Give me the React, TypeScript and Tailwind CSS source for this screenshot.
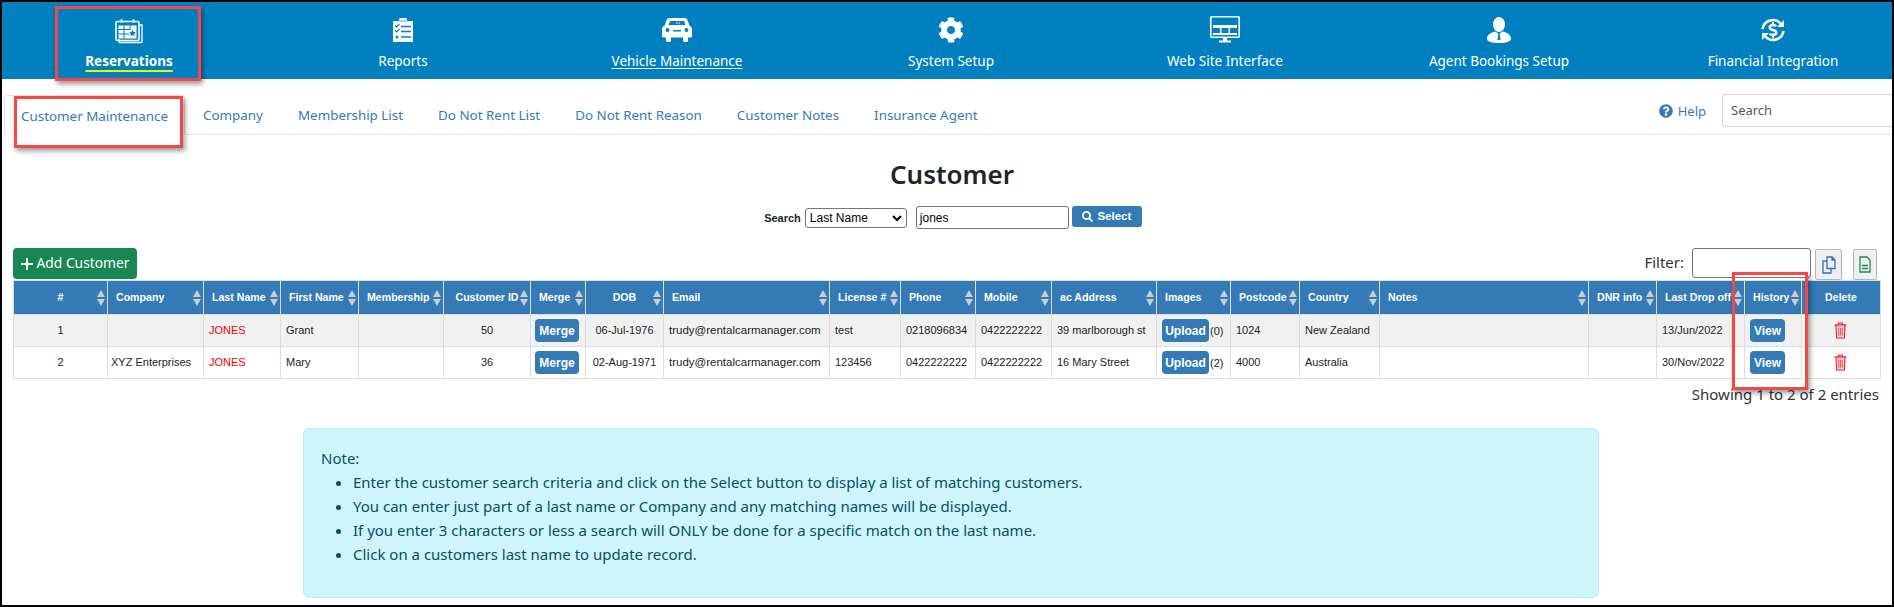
import { FaCog, FaDollarSign, FaQuestionCircle, FaSearch } from "react-icons/fa";

const CalendarIcon = () => (
  <svg width="28" height="26" viewBox="0 0 28 26" fill="none" stroke="white" className="mt-[2px]">
    <path d="M4 21v2.500a1 1 0 0 0 1 1h21a1 1 0 0 0 1-1V7h-2.500" strokeWidth="1.300" />
    <rect x="1" y="3.500" width="23" height="19" rx="1.500" strokeWidth="1.600" />
    <rect x="5.500" y="1" width="2" height="4" rx="1" fill="#cfe6f3" stroke="none" />
    <rect x="17.500" y="1" width="2" height="4" rx="1" fill="#cfe6f3" stroke="none" />
    <rect x="3.500" y="7.500" width="18" height="13" fill="white" stroke="none" />
    <path d="M3.500 6.500h18" stroke="#0180c0" strokeWidth="1" />
    <path d="M9 7.500v13M15 7.500v4M3.500 11.500h12M3.500 16h11" stroke="#0180c0" strokeWidth="1.100" />
    <path d="M17.500 11.700l1.100 2.200 2.300.3-1.700 1.600.4 2.400-2.100-1.200-2.100 1.200.4-2.400-1.700-1.600 2.300-.3z" fill="#0180c0" stroke="none" />
  </svg>
);

const ReportsIcon = () => (
  <svg width="20" height="24" viewBox="0 0 20 24">
    <path d="M0 3h6V1.500A1.500 1.500 0 0 1 7.500 0h5A1.500 1.500 0 0 1 14 1.500V3h6v21H0z" fill="white" />
    <path d="M6 3h8" stroke="#0180c0" strokeWidth="0.700" />
    <path d="M2 7.500l1.500 1.500 3-3M2 12.500l1.500 1.500 3-3" stroke="#0180c0" strokeWidth="1.100" fill="none" />
    <path d="M8 8.500h10M8 13.500h10M8 19h10" stroke="#0180c0" strokeWidth="1.300" />
    <circle cx="4" cy="19" r="1.500" fill="#0180c0" />
  </svg>
);

const CarIcon = () => (
  <svg width="30" height="24" viewBox="0 0 30 24">
    <path
      fillRule="evenodd"
      fill="white"
      d="M7.500 0h15c1.400 0 2.400.8 2.900 2l2 5.500c1.500.8 2.600 2.200 2.600 4v6.500c0 .8-.6 1.500-1.400 1.500H26v3c0 .8-.6 1.500-1.400 1.500h-2.200c-.8 0-1.400-.7-1.400-1.500v-3H9v3c0 .8-.6 1.500-1.400 1.500H5.400C4.600 24 4 23.300 4 22.500v-3H1.400C.6 19.500 0 18.800 0 18v-6.500c0-1.800 1.100-3.200 2.600-4l2-5.500C5.100.8 6.100 0 7.500 0zM8 3L6.500 7h17L22 3zM5.500 10a2 2 0 1 0 0 4 2 2 0 0 0 0-4zm19 0a2 2 0 1 0 0 4 2 2 0 0 0 0-4zM11 12v1.500h8V12z"
    />
    <path d="M14 6l1.500-2M16.500 6L18 4" stroke="white" strokeWidth="0.800" />
  </svg>
);

const MonitorIcon = () => (
  <svg width="30" height="27" viewBox="0 0 30 27" fill="none">
    <rect x="0.800" y="0.800" width="28.400" height="20.400" rx="1" stroke="white" strokeWidth="1.600" />
    <rect x="3" y="3" width="24" height="6" fill="#0180c0" />
    <rect x="3" y="9" width="24" height="10" fill="white" />
    <rect x="3" y="12" width="7" height="5" fill="#0180c0" />
    <rect x="11.500" y="12" width="7" height="5" fill="#0180c0" />
    <rect x="20" y="12" width="7" height="5" fill="#0180c0" />
    <path d="M13 22h4v2.500h-4zM9 24.500h12V26.500H9z" fill="white" />
  </svg>
);

const AgentIcon = () => (
  <svg width="24" height="26" viewBox="0 0 24 26">
    <ellipse cx="12" cy="7.500" rx="6" ry="7.500" fill="white" />
    <path d="M0 22c0-4 3-6 8-7.500l4 2 4-2c5 1.500 8 3.500 8 7.500 0 2.500-5 4-12 4S0 24.500 0 22z" fill="white" />
    <path d="M10.500 15.500l1.500 1 1.500-1-.8 2 .8 5.500h-3l.8-5.500z" fill="#0180c0" />
  </svg>
);

const FinanceIcon = () => (
  <span className="relative flex h-[24px] w-[26px] items-center justify-center">
    <svg width="26" height="24" viewBox="0 0 26 24" fill="none" stroke="white" strokeWidth="2.500" className="absolute inset-0">
      <path d="M2.500 11A10.500 10.500 0 0 1 21 6" />
      <path d="M23.500 13A10.500 10.500 0 0 1 5 18" />
      <path d="M24 2v7h-7z" fill="white" stroke="none" />
      <path d="M2 22v-7h7z" fill="white" stroke="none" />
    </svg>
    <FaDollarSign className="text-[16px] text-white" />
  </span>
);

const navItems = [
  { label: "Reservations", icon: <CalendarIcon />, extra: "font-bold underline decoration-[#f4f000] decoration-2 underline-offset-[4px]" },
  { label: "Reports", icon: <ReportsIcon />, extra: "" },
  { label: "Vehicle Maintenance", icon: <CarIcon />, extra: "underline underline-offset-2" },
  { label: "System Setup", icon: <FaCog className="text-[26px] text-white" />, extra: "" },
  { label: "Web Site Interface", icon: <MonitorIcon />, extra: "" },
  { label: "Agent Bookings Setup", icon: <AgentIcon />, extra: "" },
  { label: "Financial Integration", icon: <FinanceIcon />, extra: "mt-[1px]" },
];

const subNav = ["Company", "Membership List", "Do Not Rent List", "Do Not Rent Reason", "Customer Notes", "Insurance Agent"];

const columns = [
  { name: "#", w: 94, center: true },
  { name: "Company", w: 96 },
  { name: "Last Name", w: 77 },
  { name: "First Name", w: 78 },
  { name: "Membership", w: 85 },
  { name: "Customer ID", w: 87, center: true },
  { name: "Merge", w: 55 },
  { name: "DOB", w: 78, center: true },
  { name: "Email", w: 166 },
  { name: "License #", w: 71 },
  { name: "Phone", w: 75 },
  { name: "Mobile", w: 76 },
  { name: "ac Address", w: 105 },
  { name: "Images", w: 74 },
  { name: "Postcode", w: 69 },
  { name: "Country", w: 80 },
  { name: "Notes", w: 209 },
  { name: "DNR info", w: 68 },
  { name: "Last Drop off", w: 88 },
  { name: "History", w: 57 },
  { name: "Delete", w: 79, center: true, noSort: true },
];

const rows = [
  { n: 1, company: "", last: "JONES", first: "Grant", id: 50, dob: "06-Jul-1976", lic: "test", phone: "0218096834", mobile: "0422222222", addr: "39 marlborough st", img: "(0)", post: "1024", country: "New Zealand", drop: "13/Jun/2022" },
  { n: 2, company: "XYZ Enterprises", last: "JONES", first: "Mary", id: 36, dob: "02-Aug-1971", lic: "123456", phone: "0422222222", mobile: "0422222222", addr: "16 Mary Street", img: "(2)", post: "4000", country: "Australia", drop: "30/Nov/2022" },
];

const notes = [
  "Enter the customer search criteria and click on the Select button to display a list of matching customers.",
  "You can enter just part of a last name or Company and any matching names will be displayed.",
  "If you enter 3 characters or less a search will ONLY be done for a specific match on the last name.",
  "Click on a customers last name to update record.",
];

const SortArrows = () => (
  <svg width="8" height="16" viewBox="0 0 8 16" className="absolute right-[2px] top-[9px]" fill="#c9ccd1">
    <path d="M4 0l4 7H0zM4 16l4-7H0z" />
  </svg>
);

const BlueBtn = ({ children, className = "" }: { children: React.ReactNode; className?: string }) => (
  <button className={`h-[23px] rounded-[4px] bg-[#337ab7] text-[12px] font-bold text-white ${className}`}>{children}</button>
);

const TrashIcon = () => (
  <svg width="13" height="17" viewBox="0 0 13 17" fill="#ffd0d0" stroke="#f02020" strokeWidth="1.100" className="mx-auto -translate-x-[1px]">
    <path d="M0.500 3h12M4.500 3V1h4v2" fill="none" />
    <path d="M2 3l.6 13h7.800L11 3z" />
    <path d="M4.700 6v7.500M6.500 6v7.500M8.300 6v7.500" strokeWidth="0.700" />
  </svg>
);

const RedBox = ({ className }: { className: string }) => (
  <div className={`pointer-events-none absolute border-[3px] border-[#f44848] shadow-[2px_3px_5px_rgba(0,0,0,0.4)] ${className}`} />
);

export default function App() {
  return (
    <div className="relative h-[607px] w-[1894px] overflow-hidden border-2 border-black bg-white font-['Noto_Sans',sans-serif] text-[#212529]">
      {/* top menu */}
      <div className="h-[77px] overflow-hidden bg-[#0180c0]">
        <div className="-ml-[10px] grid w-[1918px] grid-cols-7">
          {navItems.map((item) => (
            <div key={item.label} className="flex flex-col items-center pt-[14px]">
              <div className="flex h-[27px] items-center justify-center">{item.icon}</div>
              <div className={`mt-[8px] whitespace-nowrap text-[13.5px] leading-[20px] text-white ${item.extra}`}>{item.label}</div>
            </div>
          ))}
        </div>
      </div>

      {/* sub menu */}
      <div className="flex h-[56px] items-end border-b border-[#dee2e6] pl-[2px]">
        <div className="-mb-px flex h-[40px] items-center rounded-t-[4px] border border-[#dee2e6] border-b-white px-[16px] pt-[2px] text-[13.4px] text-[#337ab7]">Customer Maintenance</div>
        <div className="flex h-[40px] items-center gap-[35px] pl-[18px] pt-[3px] text-[13.4px] text-[#337ab7]">
          {subNav.map((s) => (
            <span key={s} className="whitespace-nowrap">{s}</span>
          ))}
        </div>
        <div className="ml-auto flex h-[40px] items-start">
          <div className="mt-[8px] flex items-center gap-[5px] text-[13px] leading-[18px] text-[#337ab7]">
            <FaQuestionCircle className="text-[14px]" />
            Help
          </div>
          <div className="ml-[16px] flex h-[33px] w-[170px] items-center rounded-l-[4px] border border-r-0 border-[#ced4da] pl-[8px] text-[13px] text-[#555]">Search</div>
        </div>
      </div>

      {/* title */}
      <h2 className="mt-[19px] pl-[10px] text-center text-[26px] font-semibold leading-[40px] text-[#212529]">Customer</h2>

      {/* search form */}
      <div className="mt-[12px] flex h-[23px] items-start justify-center pl-[12px] font-['Liberation_Sans',Arial,sans-serif]">
        <span className="mt-[4px] text-[11px] font-bold text-[#212529]">Search</span>
        <div className="ml-[4px] mt-[2px] flex h-[20px] w-[102px] items-center justify-between rounded-[3px] border border-[#767676] pl-[4px] pr-[4px] text-[12px] text-black">
          Last Name
          <svg width="10" height="7" viewBox="0 0 10 7" fill="none" stroke="black" strokeWidth="2">
            <path d="M1 1l4 4 4-4" />
          </svg>
        </div>
        <div className="ml-[9px] flex h-[23px] w-[153px] items-center rounded-[3px] border border-[#767676] bg-white pl-[3px] text-[12px] text-black">jones</div>
        <button className="ml-[3px] flex h-[21px] w-[70px] items-center justify-center gap-[4px] rounded-[3px] bg-[#337ab7] text-[11.5px] font-bold text-white">
          <FaSearch className="text-[11px]" />
          Select
        </button>
      </div>

      {/* toolbar */}
      <div className="mt-[19px] flex h-[32px] items-start pl-[11px] pr-[15px]">
        <button className="flex h-[31px] w-[124px] items-center justify-center gap-[4px] rounded-[4px] bg-[#198754] text-[13.8px] text-white">
          <svg width="12" height="12" viewBox="0 0 12 12" stroke="white" strokeWidth="2">
            <path d="M6 0v12M0 6h12" />
          </svg>
          Add Customer
        </button>
        <span className="ml-auto mt-[3px] text-[15px] text-[#333]">Filter:</span>
        <div className="ml-[8px] h-[30px] w-[119px] rounded-[3px] border border-[#767676]" />
        <button className="ml-[4px] mt-[1px] flex h-[31px] w-[27px] items-center justify-center rounded-[2px] border border-[#b5b5b5] bg-[#f0f0f0]">
          <svg width="14" height="18" viewBox="0 0 14 18" fill="none" stroke="#2f6fc4" strokeWidth="1.300">
            <path d="M5 1h5l3 3v8.500H5zM10 1v3h3" />
            <path d="M5 5H1v12h8v-4.500" />
          </svg>
        </button>
        <button className="ml-[11px] mt-[1px] flex h-[31px] w-[24px] items-center justify-center rounded-[2px] border border-[#b5b5b5] bg-[#f0f0f0]">
          <svg width="12" height="17" viewBox="0 0 12 17" fill="none" stroke="#1b8a54" strokeWidth="1.300">
            <path d="M1 1h7l3 3v12H1z" />
            <path d="M3 9.500h6M3 12.500h6" strokeWidth="1.600" />
          </svg>
        </button>
      </div>

      {/* table */}
      <div className="ml-[11px] font-['Liberation_Sans',Arial,sans-serif]">
        <table className="w-[1867px] table-fixed border-collapse text-[11px] text-[#222]">
          <colgroup>
            {columns.map((c) => (
              <col key={c.name} style={{ width: c.w }} />
            ))}
          </colgroup>
          <thead>
            <tr className="h-[34px] bg-[#337ab7] text-white">
              {columns.map((c) => (
                <th key={c.name} className={`relative border border-[#ddd] px-[8px] text-[10.6px] font-bold whitespace-nowrap ${c.center ? "text-center" : "text-left"}`}>
                  {c.name}
                  {!c.noSort && <SortArrows />}
                </th>
              ))}
            </tr>
          </thead>
          <tbody>
            {rows.map((r, i) => (
              <tr key={r.n} className={`h-[32px] ${i === 0 ? "bg-[#f1f1f1]" : "bg-white"}`}>
                <td className="border border-[#ddd] text-center">{r.n}</td>
                <td className="border border-[#ddd] px-[3px] whitespace-nowrap">{r.company}</td>
                <td className="border border-[#ddd] px-[5px] text-[#f00000]">{r.last}</td>
                <td className="border border-[#ddd] px-[5px]">{r.first}</td>
                <td className="border border-[#ddd]" />
                <td className="border border-[#ddd] text-center">{r.id}</td>
                <td className="border border-[#ddd] pl-[4px]">
                  <BlueBtn className="w-[44px]">Merge</BlueBtn>
                </td>
                <td className="border border-[#ddd] text-center whitespace-nowrap">{r.dob}</td>
                <td className="border border-[#ddd] px-[5px] text-[11.5px] whitespace-nowrap">trudy@rentalcarmanager.com</td>
                <td className="border border-[#ddd] px-[5px]">{r.lic}</td>
                <td className="border border-[#ddd] px-[5px]">{r.phone}</td>
                <td className="border border-[#ddd] px-[5px]">{r.mobile}</td>
                <td className="border border-[#ddd] px-[5px] whitespace-nowrap">{r.addr}</td>
                <td className="border border-[#ddd] pl-[5px] whitespace-nowrap">
                  <BlueBtn className="w-[47px]">Upload</BlueBtn>
                  <span className="ml-[1px]">{r.img}</span>
                </td>
                <td className="border border-[#ddd] px-[5px]">{r.post}</td>
                <td className="border border-[#ddd] px-[5px] whitespace-nowrap">{r.country}</td>
                <td className="border border-[#ddd]" />
                <td className="border border-[#ddd]" />
                <td className="border border-[#ddd] px-[5px] whitespace-nowrap">{r.drop}</td>
                <td className="border border-[#ddd] pl-[5px]">
                  <BlueBtn className="w-[35px]">View</BlueBtn>
                </td>
                <td className="border border-[#ddd]">
                  <TrashIcon />
                </td>
              </tr>
            ))}
          </tbody>
        </table>
      </div>

      <div className="mt-[5px] pr-[13px] text-right text-[15px] leading-[20px] text-[#333]">Showing 1 to 2 of 2 entries</div>

      {/* note */}
      <div className="ml-[301px] mt-[24px] h-[170px] w-[1296px] rounded-[6px] border border-[#b6effb] bg-[#cff4fc] pl-[17px] pt-[17px] text-[15px] leading-[24px] text-[#055160]">
        <p>Note:</p>
        <ul className="list-disc pl-[32px]">
          {notes.map((n) => (
            <li key={n}>{n}</li>
          ))}
        </ul>
      </div>

      <RedBox className="left-[53px] top-[4px] h-[75px] w-[146px]" />
      <RedBox className="left-[12px] top-[94px] h-[52px] w-[169px]" />
      <RedBox className="left-[1730px] top-[270px] h-[118px] w-[76px]" />
    </div>
  );
}
